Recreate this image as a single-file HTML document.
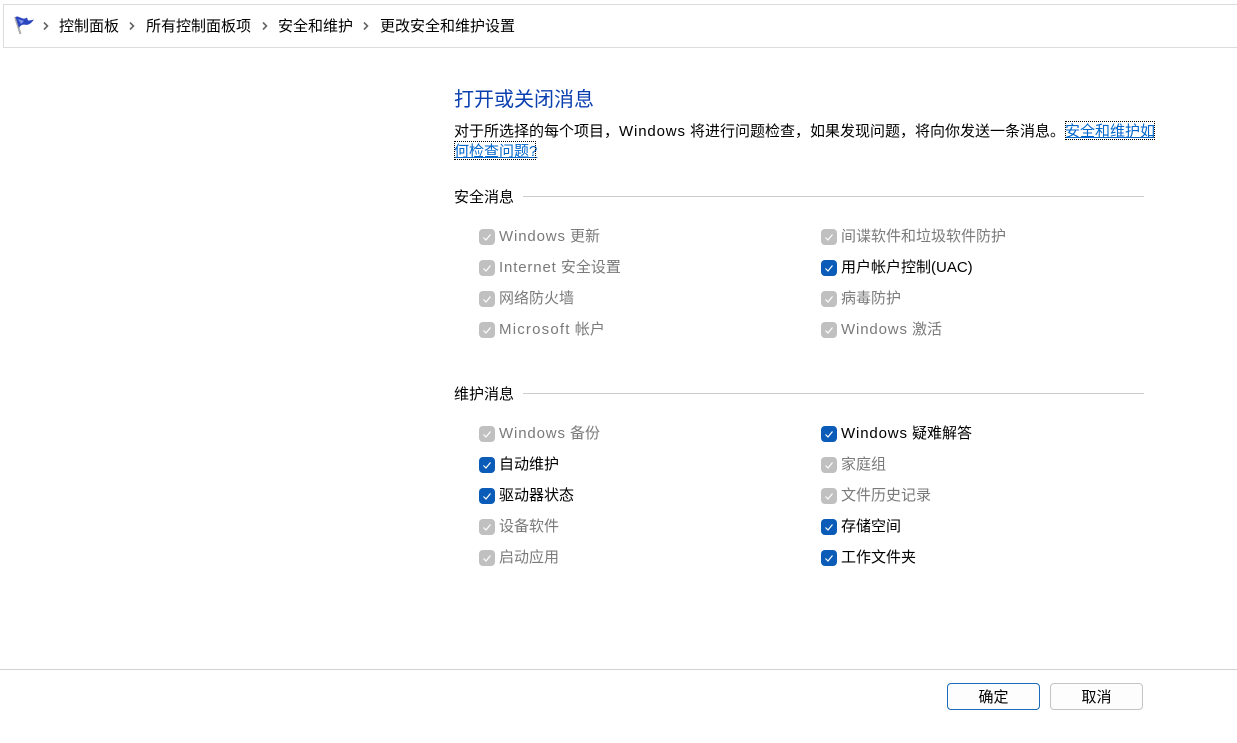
<!DOCTYPE html>
<html lang="zh-CN">
<head>
<meta charset="utf-8">
<style>
html,body{margin:0;padding:0;background:#fff;width:1237px;height:743px;overflow:hidden}
body{position:relative;font-family:"Liberation Sans","Noto Sans CJK SC",sans-serif;font-size:15px;color:#000}
.t{position:absolute;white-space:nowrap;line-height:22px;height:20px}
.bar{position:absolute;left:3px;top:4px;width:1240px;height:42px;border:1px solid #dcdcdc;background:#fff}
.chev{position:absolute;width:10px;height:10px}
.cb{position:absolute;width:16px;height:16px;border-radius:4px;background:#c0c0c0}
.cb svg{position:absolute;left:0;top:0}
.cb.on{background:#0a5cb8}
.d{color:#7a7a7a}
.w{letter-spacing:.85px}
.line{position:absolute;height:1px;background:#cccccc}
.btn{position:absolute;top:683px;width:91px;height:25px;border:1px solid #c4c4c4;border-radius:4px;background:#fdfdfd;text-align:center;line-height:27px}
</style>
</head>
<body>
<div class="bar"></div>
<svg style="position:absolute;left:12px;top:14px" width="24" height="22" viewBox="0 0 24 22">
<path d="M3 3 L8.500 20" stroke="#a9a9a9" stroke-width="2" fill="none"/>
<path d="M3.500 3 C6 1.500 8 4 11 4.500 C13 5 14 4 15 3.500 L16 6.500 C18 6.500 20 6 22 5.500 C20.500 7.500 19 9.500 16.500 10.500 C14 11.500 12 10 10 11 C8.500 11.500 7.500 13 7 14 Z" fill="#2c46c0"/>
<path d="M6 5 C8 6 10 6 12 7 L9 10 Z" fill="#7f92e6"/>
</svg>
<svg class="chev" style="left:41px;top:21px" viewBox="0 0 10 10"><path d="M3 1.500 L6.500 5 L3 8.500" fill="none" stroke="#666" stroke-width="1.600"/></svg>
<div class="t" style="left:59px;top:16px">控制面板</div>
<svg class="chev" style="left:127px;top:21px" viewBox="0 0 10 10"><path d="M3 1.500 L6.500 5 L3 8.500" fill="none" stroke="#666" stroke-width="1.600"/></svg>
<div class="t" style="left:146px;top:16px">所有控制面板项</div>
<svg class="chev" style="left:260px;top:21px" viewBox="0 0 10 10"><path d="M3 1.500 L6.500 5 L3 8.500" fill="none" stroke="#666" stroke-width="1.600"/></svg>
<div class="t" style="left:278px;top:16px">安全和维护</div>
<svg class="chev" style="left:361px;top:21px" viewBox="0 0 10 10"><path d="M3 1.500 L6.500 5 L3 8.500" fill="none" stroke="#666" stroke-width="1.600"/></svg>
<div class="t" style="left:380px;top:16px">更改安全和维护设置</div>

<div class="t" style="left:454px;top:89px;font-size:20px;line-height:22px;height:22px;color:#0a3fb0">打开或关闭消息</div>
<div class="t" style="left:454px;top:121px">对于所选择的每个项目，<span class="w">Windows</span> 将进行问题检查，如果发现问题，将向你发送一条消息。</div>
<div class="t" style="left:1065px;top:121px;height:19px;color:#0066cc;text-decoration:underline;outline:1px dotted #000;outline-offset:-1px;width:90px">安全和维护如</div>
<div class="t" style="left:454px;top:141px;height:19px;color:#0066cc;text-decoration:underline;outline:1px dotted #000;outline-offset:-1px;width:82px">何检查问题?</div>

<div class="t" style="left:454px;top:187px">安全消息</div>
<div class="line" style="left:523px;top:196px;width:621px"></div>

<div class="cb" style="left:479px;top:229px"><svg width="16" height="16"><path d="M4.500 8.500 L7 11 L11.500 5.500" fill="none" stroke="#fff" stroke-width="1.200"/></svg></div>
<div class="t d" style="left:499px;top:226px"><span class="w">Windows</span> 更新</div>
<div class="cb" style="left:479px;top:260px"><svg width="16" height="16"><path d="M4.500 8.500 L7 11 L11.500 5.500" fill="none" stroke="#fff" stroke-width="1.200"/></svg></div>
<div class="t d" style="left:499px;top:257px"><span class="w">Internet</span> 安全设置</div>
<div class="cb" style="left:479px;top:291px"><svg width="16" height="16"><path d="M4.500 8.500 L7 11 L11.500 5.500" fill="none" stroke="#fff" stroke-width="1.200"/></svg></div>
<div class="t d" style="left:499px;top:288px">网络防火墙</div>
<div class="cb" style="left:479px;top:322px"><svg width="16" height="16"><path d="M4.500 8.500 L7 11 L11.500 5.500" fill="none" stroke="#fff" stroke-width="1.200"/></svg></div>
<div class="t d" style="left:499px;top:319px"><span style="letter-spacing:1.2px">Microsoft</span> 帐户</div>

<div class="cb" style="left:821px;top:229px"><svg width="16" height="16"><path d="M4.500 8.500 L7 11 L11.500 5.500" fill="none" stroke="#fff" stroke-width="1.200"/></svg></div>
<div class="t d" style="left:841px;top:226px">间谍软件和垃圾软件防护</div>
<div class="cb on" style="left:821px;top:260px"><svg width="16" height="16"><path d="M4.500 8.500 L7 11 L11.500 5.500" fill="none" stroke="#fff" stroke-width="1.200"/></svg></div>
<div class="t" style="left:841px;top:257px">用户帐户控制(UAC)</div>
<div class="cb" style="left:821px;top:291px"><svg width="16" height="16"><path d="M4.500 8.500 L7 11 L11.500 5.500" fill="none" stroke="#fff" stroke-width="1.200"/></svg></div>
<div class="t d" style="left:841px;top:288px">病毒防护</div>
<div class="cb" style="left:821px;top:322px"><svg width="16" height="16"><path d="M4.500 8.500 L7 11 L11.500 5.500" fill="none" stroke="#fff" stroke-width="1.200"/></svg></div>
<div class="t d" style="left:841px;top:319px"><span class="w">Windows</span> 激活</div>

<div class="t" style="left:454px;top:384px">维护消息</div>
<div class="line" style="left:523px;top:393px;width:621px"></div>

<div class="cb" style="left:479px;top:426px"><svg width="16" height="16"><path d="M4.500 8.500 L7 11 L11.500 5.500" fill="none" stroke="#fff" stroke-width="1.200"/></svg></div>
<div class="t d" style="left:499px;top:423px"><span class="w">Windows</span> 备份</div>
<div class="cb on" style="left:479px;top:457px"><svg width="16" height="16"><path d="M4.500 8.500 L7 11 L11.500 5.500" fill="none" stroke="#fff" stroke-width="1.200"/></svg></div>
<div class="t" style="left:499px;top:454px">自动维护</div>
<div class="cb on" style="left:479px;top:488px"><svg width="16" height="16"><path d="M4.500 8.500 L7 11 L11.500 5.500" fill="none" stroke="#fff" stroke-width="1.200"/></svg></div>
<div class="t" style="left:499px;top:485px">驱动器状态</div>
<div class="cb" style="left:479px;top:519px"><svg width="16" height="16"><path d="M4.500 8.500 L7 11 L11.500 5.500" fill="none" stroke="#fff" stroke-width="1.200"/></svg></div>
<div class="t d" style="left:499px;top:516px">设备软件</div>
<div class="cb" style="left:479px;top:550px"><svg width="16" height="16"><path d="M4.500 8.500 L7 11 L11.500 5.500" fill="none" stroke="#fff" stroke-width="1.200"/></svg></div>
<div class="t d" style="left:499px;top:547px">启动应用</div>

<div class="cb on" style="left:821px;top:426px"><svg width="16" height="16"><path d="M4.500 8.500 L7 11 L11.500 5.500" fill="none" stroke="#fff" stroke-width="1.200"/></svg></div>
<div class="t" style="left:841px;top:423px"><span class="w">Windows</span> 疑难解答</div>
<div class="cb" style="left:821px;top:457px"><svg width="16" height="16"><path d="M4.500 8.500 L7 11 L11.500 5.500" fill="none" stroke="#fff" stroke-width="1.200"/></svg></div>
<div class="t d" style="left:841px;top:454px">家庭组</div>
<div class="cb" style="left:821px;top:488px"><svg width="16" height="16"><path d="M4.500 8.500 L7 11 L11.500 5.500" fill="none" stroke="#fff" stroke-width="1.200"/></svg></div>
<div class="t d" style="left:841px;top:485px">文件历史记录</div>
<div class="cb on" style="left:821px;top:519px"><svg width="16" height="16"><path d="M4.500 8.500 L7 11 L11.500 5.500" fill="none" stroke="#fff" stroke-width="1.200"/></svg></div>
<div class="t" style="left:841px;top:516px">存储空间</div>
<div class="cb on" style="left:821px;top:550px"><svg width="16" height="16"><path d="M4.500 8.500 L7 11 L11.500 5.500" fill="none" stroke="#fff" stroke-width="1.200"/></svg></div>
<div class="t" style="left:841px;top:547px">工作文件夹</div>

<div class="line" style="left:0;top:669px;width:1237px;background:#d2d2d2"></div>
<div class="btn" style="left:947px;border-color:#1a6cb8">确定</div>
<div class="btn" style="left:1050px">取消</div>
</body>
</html>
